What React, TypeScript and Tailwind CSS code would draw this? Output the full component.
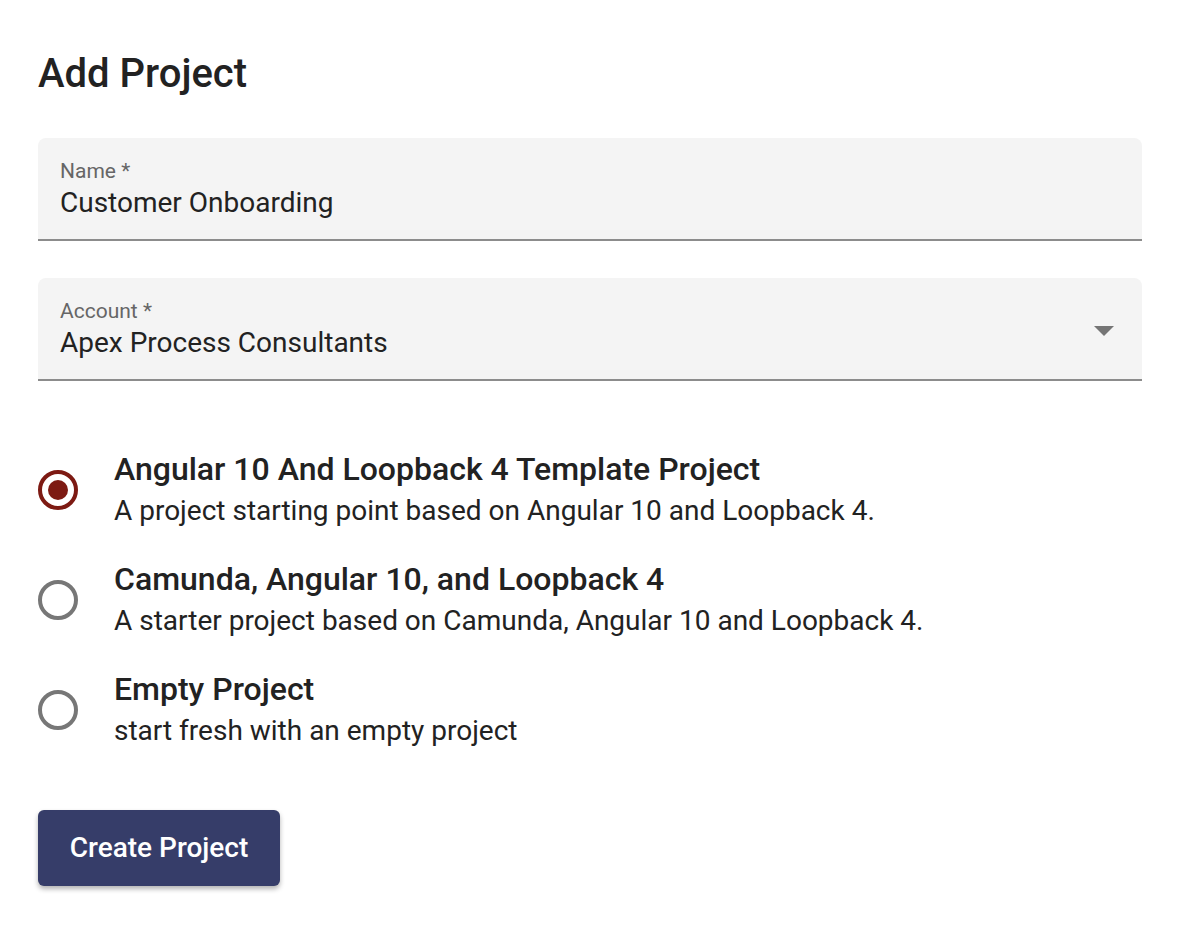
import { useState } from "react";

const templates = [
  {
    id: "angular-loopback",
    title: "Angular 10 And Loopback 4 Template Project",
    description: "A project starting point based on Angular 10 and Loopback 4.",
  },
  {
    id: "camunda",
    title: "Camunda, Angular 10, and Loopback 4",
    description: "A starter project based on Camunda, Angular 10 and Loopback 4.",
  },
  {
    id: "empty",
    title: "Empty Project",
    description: "start fresh with an empty project",
  },
];

function Field({ label, value, select }: { label: string; value: string; select?: boolean }) {
  return (
    <div className="flex h-[103px] items-center rounded-t-[8px] border-b-2 border-[#8c8c8c] bg-[#f4f4f4] pl-[22px] pr-[28px]">
      <div className="flex flex-1 flex-col">
        <span className="text-[21px] leading-[28px] text-[#666]">{label}</span>
        <span className="text-[28px] leading-[36px] text-[#222]">{value}</span>
      </div>
      {select && (
        <svg width="20" height="10" viewBox="0 0 20 10" className="mt-[4px]">
          <path d="M0 0 L20 0 L10 10 Z" fill="#757575" />
        </svg>
      )}
    </div>
  );
}

function Radio({ checked }: { checked: boolean }) {
  return (
    <div
      className={`flex h-[40px] w-[40px] shrink-0 items-center justify-center rounded-full border-[4px] ${
        checked ? "border-[#7d1a13]" : "border-[#777]"
      }`}
    >
      {checked && <div className="h-[20px] w-[20px] rounded-full bg-[#7d1a13]" />}
    </div>
  );
}

export default function App() {
  const [selected, setSelected] = useState("angular-loopback");

  return (
    <div className="min-h-screen bg-white px-[38px] pt-[48px] text-[#222]" style={{ fontFamily: "Roboto, 'Liberation Sans', sans-serif" }}>
      <h1 className="text-[40px] font-medium leading-[52px] text-[#222]">Add Project</h1>

      <div className="mt-[38px] flex w-[1104px] flex-col gap-[37px]">
        <Field label="Name *" value="Customer Onboarding" />
        <Field label="Account *" value="Apex Process Consultants" select />
      </div>

      <div className="mt-[67px] flex flex-col gap-[26px]">
        {templates.map((t) => (
          <div key={t.id} className="flex cursor-pointer items-center gap-[36px]" onClick={() => setSelected(t.id)}>
            <Radio checked={selected === t.id} />
            <div className="flex flex-col">
              <span className="text-[32px] font-medium leading-[42px]">{t.title}</span>
              <span className="text-[28px] leading-[42px]">{t.description}</span>
            </div>
          </div>
        ))}
      </div>

      <button className="mt-[58px] h-[76px] w-[242px] rounded-[6px] bg-[#363d69] text-[28px] font-medium text-white shadow-[0_3px_5px_rgba(0,0,0,0.3)]">
        Create Project
      </button>
    </div>
  );
}
